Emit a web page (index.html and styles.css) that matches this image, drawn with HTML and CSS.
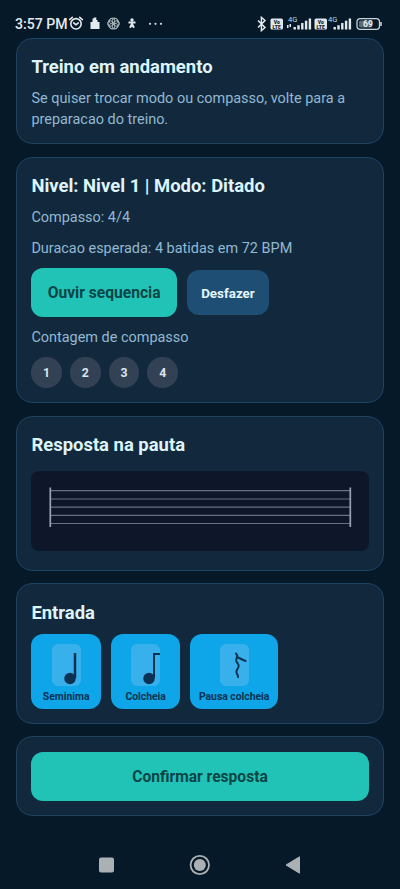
FILE: index.html
```html
<!DOCTYPE html>
<html lang="pt">
<head>
<meta charset="utf-8">
<title>Treino</title>
<link rel="stylesheet" href="styles.css">
</head>
<body>
<div class="screen">
  <header class="status">
    <span class="clock">3:57 PM</span>
    <svg class="status-left" width="100" height="16" viewBox="0 0 100 16">
      <g fill="none" stroke="#e3eaed" stroke-width="1.6" stroke-linecap="round">
        <circle cx="8" cy="8.800" r="5.200"/>
        <path d="M5.700 7.800l2.200 2 2.300-1.800M1.600 4.600L4.300 2.300M14.400 4.600L11.700 2.300"/>
      </g>
      <path fill="#e3eaed" d="M22.500 7h2V3.500h1.300V2.500h2.500V5h1.200V7h2V14h-9z"/>
      <g fill="none" stroke="#a5b1b8" stroke-width="1">
        <ellipse cx="45.500" cy="6" rx="4.200" ry="2.900"/>
        <ellipse cx="45.500" cy="6" rx="4.200" ry="2.900" transform="rotate(60 45.500 8.500)"/>
        <ellipse cx="45.500" cy="6" rx="4.200" ry="2.900" transform="rotate(120 45.500 8.500)"/>
        <ellipse cx="45.500" cy="6" rx="4.200" ry="2.900" transform="rotate(180 45.500 8.500)"/>
        <ellipse cx="45.500" cy="6" rx="4.200" ry="2.900" transform="rotate(240 45.500 8.500)"/>
        <ellipse cx="45.500" cy="6" rx="4.200" ry="2.900" transform="rotate(300 45.500 8.500)"/>
      </g>
      <circle cx="64" cy="5" r="1.700" fill="#e3eaed"/>
      <path d="M60.500 7.500h7M64 6.500v3M63.700 9.500l-1.700 3.200M64.300 9.500l1.700 3.200" fill="none" stroke="#e3eaed" stroke-width="1.900"/>
      <g fill="#d4dde1"><circle cx="82" cy="8.800" r="1.100"/><circle cx="87.500" cy="8.800" r="1.100"/><circle cx="93" cy="8.800" r="1.100"/></g>
    </svg>
    <svg class="status-right" width="128" height="18" viewBox="0 0 128 18">
      <path d="M2 5.500l7 7-3.600 3.200V2.300L9 5.500l-7 7" fill="none" stroke="#e3eaed" stroke-width="1.500"/>
      <rect x="14.500" y="3.500" width="12.500" height="11" rx="1.500" fill="#dfe7ea"/>
      <rect x="58.500" y="3.500" width="12.500" height="11" rx="1.500" fill="#dfe7ea"/>
      <g class="volte" text-anchor="middle"><text x="20.700" y="8.500">Vo</text><text x="20.700" y="13.500">LTE</text><text x="64.700" y="8.500">Vo</text><text x="64.700" y="13.500">LTE</text></g>
      <g class="net"><text x="32" y="6.500">4G</text><text x="72" y="6.500">4G</text></g>
      <g fill="#e3eaed">
        <rect x="31" y="10" width="1.500" height="3"/><rect x="33.500" y="9" width="1.500" height="3"/>
        <rect x="37.500" y="12" width="2.400" height="2.500"/><rect x="41.300" y="10.200" width="2.400" height="4.300"/><rect x="45.100" y="8" width="2.400" height="6.500"/><rect x="48.900" y="5.700" width="2.400" height="8.800"/><rect x="52.700" y="3.500" width="2.400" height="11"/>
        <rect x="77.500" y="12" width="2.400" height="2.500"/><rect x="81.300" y="10.200" width="2.400" height="4.300"/><rect x="85.100" y="8" width="2.400" height="6.500"/><rect x="88.900" y="5.700" width="2.400" height="8.800"/><rect x="92.700" y="3.500" width="2.400" height="11"/>
      </g>
      <rect x="101" y="3.700" width="22.500" height="10.600" rx="3.300" fill="none" stroke="#cbd5da" stroke-width="1.300"/>
      <rect x="103" y="5.500" width="13" height="7" rx="1.500" fill="#5c6c76"/>
      <path d="M125 7v4" stroke="#cbd5da" stroke-width="1.500"/>
      <text class="charge" x="112" y="12" text-anchor="middle">69</text>
    </svg>
  </header>

  <main class="cards">
    <section class="card intro">
      <h2>Treino em andamento</h2>
      <p>Se quiser trocar modo ou compasso, volte para a preparacao do treino.</p>
    </section>

    <section class="card level">
      <h2>Nivel: Nivel 1 | Modo: Ditado</h2>
      <p>Compasso: 4/4</p>
      <p>Duracao esperada: 4 batidas em 72 BPM</p>
      <div class="actions">
        <button class="primary listen">Ouvir sequencia</button>
        <button class="undo">Desfazer</button>
      </div>
      <p>Contagem de compasso</p>
      <div class="beats"><span>1</span><span>2</span><span>3</span><span>4</span></div>
    </section>

    <section class="card answer">
      <h2>Resposta na pauta</h2>
      <div class="staff">
        <svg width="338" height="80" viewBox="0 0 338 80">
          <path d="M19 19.700H320M19 28H320M19 36.200H320M19 44.400H320M19 52.500H320" stroke="#667080" stroke-width="1.200"/>
          <path d="M19.300 16.500V56M319.300 16.500V56" stroke="#98a3b3" stroke-width="1.700"/>
        </svg>
      </div>
    </section>

    <section class="card entry">
      <h2>Entrada</h2>
      <div class="keys">
        <button class="key">
          <svg width="29" height="42" viewBox="0 0 29 42"><rect width="29" height="42" rx="6" fill="#38b0eb"/><path d="M23 9V34" stroke="#0b3252" stroke-width="2.500"/><circle cx="18" cy="34.500" r="5.700" fill="#0b3252"/></svg>
          <span>Seminima</span>
        </button>
        <button class="key">
          <svg width="29" height="42" viewBox="0 0 29 42"><rect width="29" height="42" rx="6" fill="#38b0eb"/><path d="M23 34V10h6" fill="none" stroke="#0b3252" stroke-width="2"/><circle cx="18" cy="34.500" r="5.700" fill="#0b3252"/></svg>
          <span>Colcheia</span>
        </button>
        <button class="key wide">
          <svg width="29" height="42" viewBox="0 0 29 42"><rect width="29" height="42" rx="6" fill="#38b0eb"/><path d="M16 9.500c3 2.500 0 4.500.200 7s3.500 3.500 2.300 6.500-2.500 3-2 5.500 1.800 2.500 1.500 4.500M18 13.500l7.500 3.500" fill="none" stroke="#0b3252" stroke-width="2" stroke-linecap="round"/></svg>
          <span>Pausa colcheia</span>
        </button>
      </div>
    </section>

    <section class="card submit">
      <button class="primary">Confirmar resposta</button>
    </section>
  </main>

  <nav class="navbar">
    <svg width="210" height="24" viewBox="0 0 210 24">
      <rect x="4" y="4.500" width="15" height="15" rx="2" fill="#abb0b4"/>
      <circle cx="104.800" cy="12" r="9.200" fill="none" stroke="#abb0b4" stroke-width="1.800"/><circle cx="104.800" cy="12" r="6" fill="#abb0b4"/>
      <path d="M191 12L204.500 3.800V20.200z" fill="#abb0b4" stroke="#abb0b4" stroke-width="1" stroke-linejoin="round"/>
    </svg>
  </nav>
</div>
</body>
</html>
```
FILE: styles.css
```css
* { box-sizing: border-box; }
body { margin: 0; background: #061928; font-family: Roboto, sans-serif; }
.screen { width: 400px; height: 889px; overflow: hidden; display: flex; flex-direction: column; background: #061928; }
.status { height: 38px; flex: none; display: flex; align-items: flex-start; padding: 15px 16px 0 15px; color: #e3eaed; }
.clock { width: 53px; font-size: 14.1px; line-height: 19px; font-weight: 500; white-space: nowrap; }
.status-right { margin-left: auto; }
.volte { font-size: 5px; font-weight: 900; fill: #0b1c29; }
.net { font-size: 7.5px; fill: #cbd5da; }
.charge { font-size: 8.5px; font-weight: 700; fill: #e9eff1; }
.cards { display: flex; flex-direction: column; gap: 12.7px; padding: 0 16px; }
.card { border: 1px solid #1d4262; border-radius: 16px; padding: 14.4px; background: #12293d; display: flex; flex-direction: column; gap: 10px; }
.intro { height: 106.2px; }
.level { height: 246.500px; }
.answer { height: 154.700px; }
.entry { height: 140.300px; }
.submit { height: 79.500px; }
h2 { margin: 0 0 -1.800px; padding-top: 1.800px; font-size: 18.45px; line-height: 25px; font-weight: 700; color: #def4fb; white-space: nowrap; }
p { margin: 0 0 -1px; padding-top: 1px; font-size: 14.45px; line-height: 20.400px; color: #92b8d2; }
button { border: 0; padding: 0; font-family: inherit; font-weight: 700; }
.actions { display: flex; align-items: center; gap: 10.300px; }
.primary { height: 48.800px; padding-top: 1.500px; border-radius: 12px; background: #22c3b7; color: #0a4547; font-size: 15.6px; }
.listen { width: 145.500px; }
.undo { width: 81.500px; height: 45px; padding-top: 1.500px; border-radius: 12px; background: #1f4e75; color: #e5f7ff; font-size: 13.4px; }
.beats { display: flex; gap: 8.200px; }
.beats span { width: 30.500px; height: 30.500px; padding-top: 1px; border-radius: 50%; background: #334155; color: #dce6ef; font-size: 12.3px; font-weight: 700; line-height: 30.500px; text-align: center; }
.staff { flex: none; margin: 4.500px -0.700px 0; height: 80px; border-radius: 8px; background: #0e172a; }
.staff svg { display: block; }
.keys { display: flex; gap: 10px; }
.key { width: 69.500px; height: 75.500px; border-radius: 12px; background: #0ea5e9; color: #0b3252; display: flex; flex-direction: column; align-items: center; padding-top: 10px; gap: 4.200px; }
.key.wide { width: 87.500px; }
.key span { font-size: 10.35px; line-height: 14px; white-space: nowrap; }
.navbar { margin-top: auto; height: 48px; display: flex; justify-content: center; align-items: center; }
```
